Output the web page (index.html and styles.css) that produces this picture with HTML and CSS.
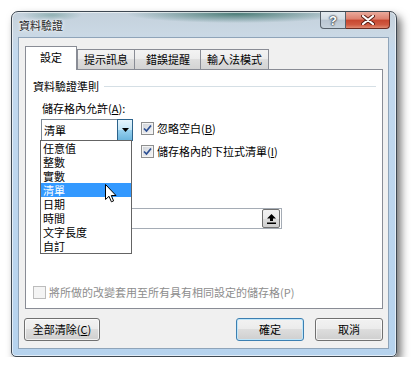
FILE: index.html
```html
<!DOCTYPE html>
<html lang="zh-Hant">
<head>
    <meta charset="UTF-8">
    <title>資料驗證</title>
    <link rel="stylesheet" href="styles.css">
</head>
<body>
    <div class="window">
        <div class="titlebar">
            <span class="title">資料驗證</span>
            <div class="caption-buttons">
                <span class="cap-btn help">?</span>
                <span class="cap-btn close">
                    <svg width="14" height="10" viewBox="0 0 14 10">
                        <path d="M2 1 L12 9 M12 1 L2 9" stroke="#5a1e14" stroke-width="4" stroke-linecap="round"/>
                        <path d="M2 1 L12 9 M12 1 L2 9" stroke="#fff" stroke-width="2.2" stroke-linecap="round"/>
                    </svg>
                </span>
            </div>
        </div>

        <div class="client">
            <div class="tabs">
                <div class="tab active">設定</div>
                <div class="tab">提示訊息</div>
                <div class="tab wide">錯誤提醒</div>
                <div class="tab">輸入法模式</div>
            </div>

            <div class="panel">
                <div class="group-title">
                    <span>資料驗證準則</span>
                    <span class="rule"></span>
                </div>

                <div class="label">儲存格內允許(<u>A</u>):</div>
                <div class="allow-row">
                    <div class="combo">
                        <span class="combo-text">清單</span>
                        <span class="combo-btn">
                            <svg width="7" height="4" viewBox="0 0 7 4"><path d="M0 0 H7 L3.5 4 Z"/></svg>
                        </span>
                    </div>
                    <div class="checks">
                        <div class="check">
                            <span class="box checked">
                                <svg width="9" height="9" viewBox="0 0 9 9"><path d="M1 4.5 L3.5 7 L8 1.5" fill="none" stroke="#2c4f93" stroke-width="1.7"/></svg>
                            </span>
                            <span>忽略空白(<u>B</u>)</span>
                        </div>
                        <div class="check">
                            <span class="box checked">
                                <svg width="9" height="9" viewBox="0 0 9 9"><path d="M1 4.5 L3.5 7 L8 1.5" fill="none" stroke="#2c4f93" stroke-width="1.7"/></svg>
                            </span>
                            <span>儲存格內的下拉式清單(<u>I</u>)</span>
                        </div>
                    </div>
                </div>

                <!-- 來源欄位 (標籤被下拉清單蓋住) -->
                <div class="textbox">
                    <span class="ref-btn">
                        <svg width="9" height="10" viewBox="0 0 9 10">
                            <path d="M4.5 0 L9 4.5 H6 V7 H3 V4.5 H0 Z"/>
                            <rect x="0" y="8.5" width="9" height="1.5"/>
                        </svg>
                    </span>
                </div>

                <div class="apply-all">
                    <span class="box disabled"></span>
                    <span>將所做的改變套用至所有具有相同設定的儲存格(P)</span>
                </div>

                <!-- 開啟中的下拉清單 -->
                <ul class="dropdown">
                    <li>任意值</li>
                    <li>整數</li>
                    <li>實數</li>
                    <li class="selected">清單</li>
                    <li>日期</li>
                    <li>時間</li>
                    <li>文字長度</li>
                    <li>自訂</li>
                </ul>

                <svg class="cursor" width="12" height="19" viewBox="0 0 12 19">
                    <path d="M0.5 0.5 V15.5 L4 12.3 L6.4 17.8 L8.6 16.9 L6.3 11.5 H11 Z" fill="#fff" stroke="#000" stroke-width="1" stroke-linejoin="round"/>
                </svg>
            </div>

            <div class="buttons">
                <button class="btn btn-clear">全部清除(<u>C</u>)</button>
                <button class="btn btn-ok">確定</button>
                <button class="btn btn-cancel">取消</button>
            </div>
        </div>
    </div>
</body>
</html>
```

FILE: styles.css
```css
* {
    box-sizing: border-box;
}

body {
    margin: 0;
    background: #fff;
    font-family: "Noto Sans CJK TC", "Noto Sans CJK JP", sans-serif;
    font-size: 11px;
    line-height: 13px;
    color: #000;
}

u {
    text-decoration: underline;
    text-underline-offset: 1px;
}

/* 視窗外框 (Aero) */
.window {
    margin: 11px 0 0 11px;
    width: 386px;
    height: 346px;
    border: 1px solid #3e4852;
    border-radius: 7px 7px 5px 5px;
    background:
        radial-gradient(ellipse 110px 9px at 225px 2px, rgba(40, 100, 90, 0.75), transparent),
        radial-gradient(ellipse 30px 6px at 40px 3px, rgba(70, 130, 120, 0.4), transparent),
        linear-gradient(#c4d1dc 0, #cad8e4 22px, #c3d9ee 40px, #b6d3ee 100%);
    box-shadow: 4px 5px 8px rgba(0, 0, 0, 0.55), inset 0 0 0 1px rgba(255, 255, 255, 0.6);
    display: flex;
    flex-direction: column;
}

.titlebar {
    height: 25px;
    display: flex;
    align-items: flex-start;
}

.title {
    padding: 7px 0 0 7px;
    color: #1f1f1f;
    text-shadow: 0 0 4px #fff, 0 0 2px #fff;
}

.caption-buttons {
    margin-left: auto;
    margin-right: 6px;
    display: flex;
}

.cap-btn {
    height: 17px;
    border: 1px solid #56606a;
    border-top: none;
    display: flex;
    align-items: center;
    justify-content: center;
}

.help {
    width: 26px;
    border-radius: 0 0 0 4px;
    background: linear-gradient(#e4eaef, #d3dce4 45%, #b9c6d2 50%, #c6d2dc);
    color: #fff;
    font-family: "Liberation Sans", sans-serif;
    font-weight: bold;
    font-size: 13px;
    text-shadow: 0 0 1px #2d3946, 0 0 2px #2d3946, 0 0 2px #2d3946;
}

.close {
    width: 44px;
    border-left: none;
    border-color: #6b2b21;
    border-radius: 0 0 4px 0;
    background: linear-gradient(#eaaa9c, #dc806e 45%, #c7462f 50%, #cf5a41 80%, #e08a72);
}

/* 對話方塊內容 */
.client {
    flex: 1;
    margin: 0 7px 7px 6px;
    background: #f0f0f0;
    border: 1px solid #8fa4b9;
    padding: 8px 5px 0 6px;
    display: flex;
    flex-direction: column;
}

.tabs {
    display: flex;
    align-items: flex-end;
    height: 23px;
}

.tab {
    height: 20px;
    padding: 0 6px;
    margin-left: -1px;
    border: 1px solid #898c95;
    border-bottom: none;
    background: linear-gradient(#f3f3f3, #ececec 50%, #dedede 50%, #d3d3d3);
    display: flex;
    align-items: center;
}

.tab.wide {
    padding: 0 10px 0 11px;
}

.tab.active {
    height: 24px;
    margin-left: 0;
    margin-bottom: -1px;
    padding: 0 14px 2px;
    background: #fff;
    position: relative;
    z-index: 1;
}

.active + .tab {
    margin-left: 0;
}

.panel {
    position: relative;
    height: 240px;
    border: 1px solid #898c95;
    background: #fff;
    display: flex;
    flex-direction: column;
}

.group-title {
    display: flex;
    align-items: center;
    margin: 10px 6px 0 7px;
}

.rule {
    flex: 1;
    height: 1px;
    margin-left: 5px;
    background: #d5dfe5;
}

.label {
    margin: 9px 0 0 16px;
}

.allow-row {
    display: flex;
    align-items: flex-start;
    margin: 4px 0 0 15px;
}

.combo {
    width: 92px;
    height: 22px;
    border: 1px solid #7e8a96;
    background: #fff;
    display: flex;
}

.combo-text {
    flex: 1;
    padding-left: 2px;
    line-height: 20px;
}

.combo-btn {
    width: 16px;
    margin: -1px -1px -1px 0;
    border: 1px solid #2c628b;
    background: linear-gradient(#e5f4fc, #c4e5f6 50%, #98d1ef 50%, #6db6de);
    display: flex;
    align-items: center;
    justify-content: center;
}

.checks {
    margin: 3px 0 0 8px;
    display: flex;
    flex-direction: column;
    gap: 10px;
}

.check {
    display: flex;
    align-items: center;
    gap: 3px;
    height: 13px;
}

.box {
    width: 13px;
    height: 13px;
    flex: none;
    border: 1px solid #8e8f8f;
    display: flex;
    align-items: center;
    justify-content: center;
}

.box.checked {
    background: linear-gradient(135deg, #cdd1d7, #f7f7f7);
    box-shadow: inset 0 0 0 1px #f4f4f4;
}

.box.disabled {
    border-color: #bcbcbc;
    background: #f4f4f4;
}

.textbox {
    width: 241px;
    height: 21px;
    margin: 50px 0 0 15px;
    border: 1px solid #a5acb5;
    background: #fff;
    display: flex;
    justify-content: flex-end;
    align-items: center;
    padding-right: 1px;
}

.ref-btn {
    width: 18px;
    height: 19px;
    border: 1px solid #707070;
    border-radius: 2px;
    background: linear-gradient(#f2f2f2, #ebebeb 50%, #dddddd 50%, #cfcfcf);
    display: flex;
    align-items: center;
    justify-content: center;
}

.apply-all {
    margin: auto 0 9px 7px;
    display: flex;
    align-items: center;
    gap: 3px;
    color: #8d8d8d;
}

.dropdown {
    position: absolute;
    left: 14px;
    top: 70px;
    width: 92px;
    margin: 0;
    padding: 0;
    list-style: none;
    border: 1px solid #646464;
    background: #fff;
}

.dropdown li {
    height: 14px;
    line-height: 14px;
    padding-left: 2px;
}

.dropdown li.selected {
    background: #3399ff;
    color: #fff;
}

.cursor {
    position: absolute;
    left: 79px;
    top: 114px;
}

/* 按鈕列 */
.buttons {
    display: flex;
    margin-top: 9px;
}

.btn {
    height: 23px;
    padding: 0;
    border: 1px solid #707070;
    border-radius: 3px;
    background: linear-gradient(#f2f2f2, #ebebeb 50%, #dddddd 50%, #cfcfcf);
    box-shadow: inset 0 0 0 1px rgba(255, 255, 255, 0.7);
    font: inherit;
    color: #000;
    display: flex;
    align-items: center;
    justify-content: center;
}

.btn-clear {
    width: 76px;
    margin-left: -1px;
}

.btn-ok {
    width: 68px;
    margin-left: auto;
    border-color: #3c7fb1;
    box-shadow: inset 0 0 0 1px #bfe6fa;
}

.btn-cancel {
    width: 68px;
    margin-left: 11px;
}
```
